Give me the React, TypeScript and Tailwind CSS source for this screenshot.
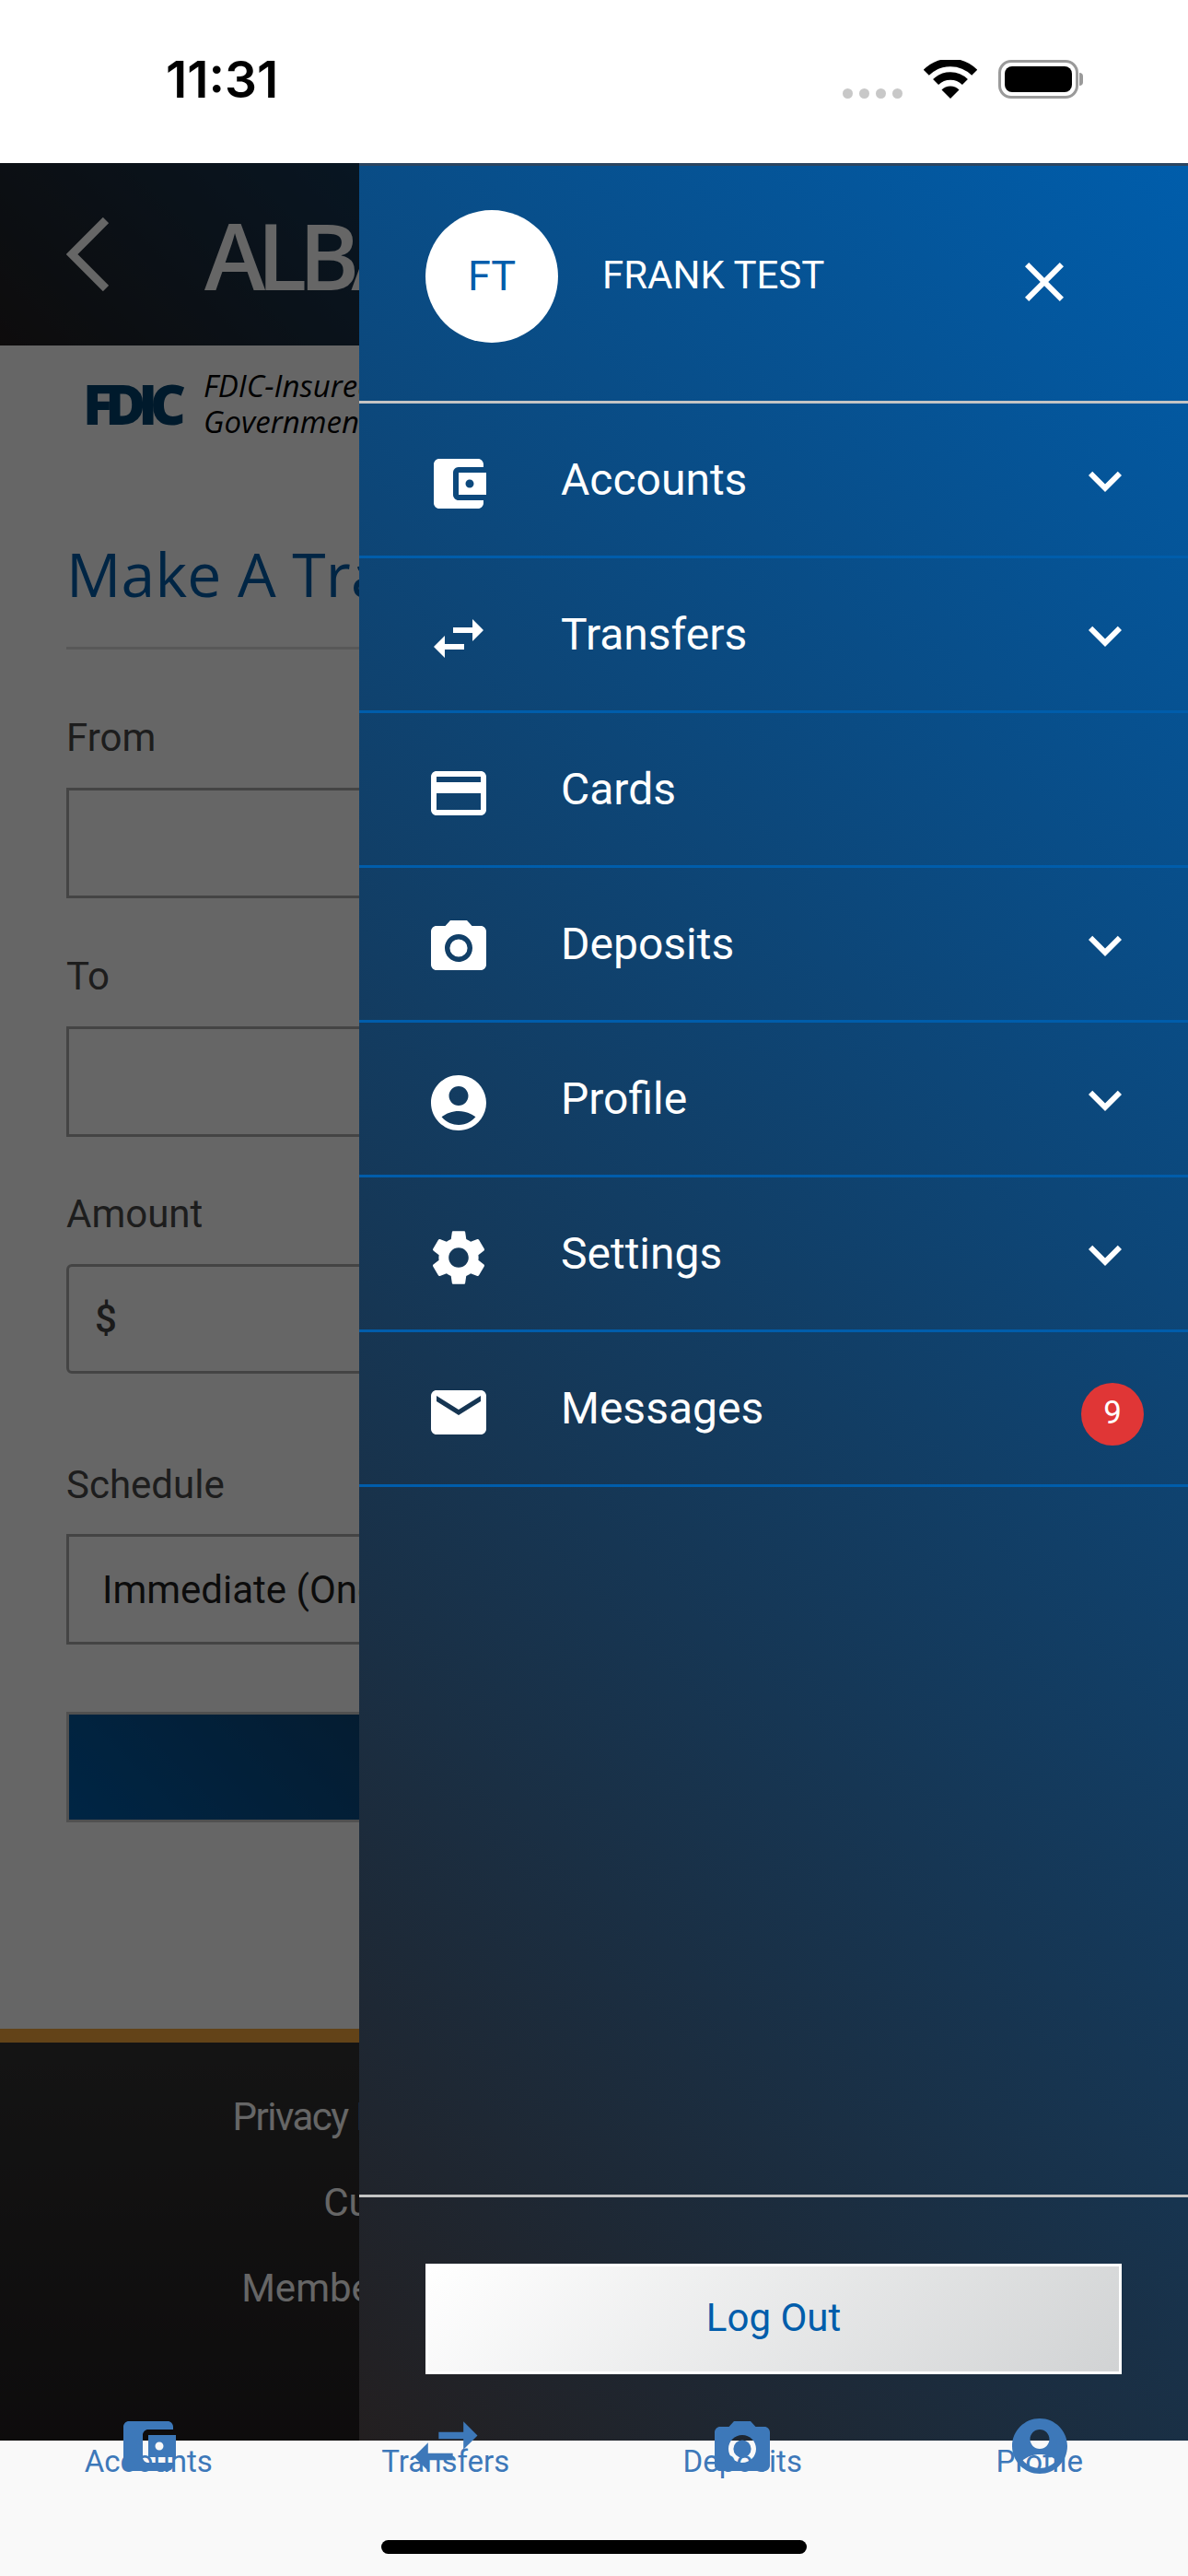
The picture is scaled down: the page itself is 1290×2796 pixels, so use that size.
import React from "react";

const P = {
  wallet:
    "M21 18v1c0 1.1-.9 2-2 2H5c-1.11 0-2-.9-2-2V5c0-1.1.89-2 2-2h14c1.1 0 2 .9 2 2v1h-9c-1.11 0-2 .9-2 2v8c0 1.1.89 2 2 2h9zm-9-2h10V8H12v8zm4-2.5c-.83 0-1.5-.67-1.5-1.5s.67-1.5 1.5-1.5 1.5.67 1.5 1.5-.67 1.5-1.5 1.5z",
  swap: "M6.99 11L3 15l3.99 4v-3H14v-2H6.99v-3zM21 9l-3.99-4v3H10v2h7.01v3L21 9z",
  card: "M20 4H4c-1.11 0-1.99.89-1.99 2L2 18c0 1.11.89 2 2 2h16c1.11 0 2-.89 2-2V6c0-1.11-.89-2-2-2zm0 14H4v-6h16v6zm0-10H4V6h16v2z",
  camera:
    "M9 2L7.17 4H4c-1.1 0-2 .9-2 2v12c0 1.1.9 2 2 2h16c1.1 0 2-.9 2-2V6c0-1.1-.9-2-2-2h-3.17L15 2H9zm3 15c-2.76 0-5-2.24-5-5s2.24-5 5-5 5 2.24 5 5-2.24 5-5 5zm0-8.2a3.2 3.2 0 1 0 0 6.4 3.2 3.2 0 0 0 0-6.4z",
  profile:
    "M12 2C6.48 2 2 6.48 2 12s4.48 10 10 10 10-4.48 10-10S17.52 2 12 2zm0 4c1.93 0 3.5 1.57 3.5 3.5S13.93 13 12 13s-3.5-1.57-3.5-3.5S10.07 6 12 6zm0 14c-2.03 0-4.43-.82-6.14-2.88C7.55 15.8 9.68 15 12 15s4.45.8 6.14 2.12C16.43 19.18 14.03 20 12 20z",
  gear: "M19.14 12.94c.04-.3.06-.61.06-.94 0-.32-.02-.64-.07-.94l2.03-1.58c.18-.14.23-.41.12-.61l-1.92-3.32c-.12-.22-.37-.29-.59-.22l-2.39.96c-.5-.38-1.03-.7-1.62-.94l-.36-2.54c-.04-.24-.24-.41-.48-.41h-3.84c-.24 0-.43.17-.47.41l-.36 2.54c-.59.24-1.13.57-1.62.94l-2.39-.96c-.22-.08-.47 0-.59.22L2.74 8.87c-.12.21-.08.47.12.61l2.03 1.58c-.05.3-.09.63-.09.94s.02.64.07.94l-2.03 1.58c-.18.14-.23.41-.12.61l1.92 3.32c.12.22.37.29.59.22l2.39-.96c.5.38 1.03.7 1.62.94l.36 2.54c.05.24.24.41.48.41h3.84c.24 0 .44-.17.47-.41l.36-2.54c.59-.24 1.13-.56 1.62-.94l2.39.96c.22.08.47 0 .59-.22l1.92-3.32c.12-.22.07-.47-.12-.61l-2.01-1.58zM12 15.6c-1.98 0-3.6-1.62-3.6-3.6s1.62-3.6 3.6-3.6 3.6 1.62 3.6 3.6-1.62 3.6-3.6 3.6z",
  mail: "M20 4H4c-1.1 0-1.99.9-1.99 2L2 18c0 1.1.9 2 2 2h16c1.1 0 2-.9 2-2V6c0-1.1-.9-2-2-2zm0 4l-8 5-8-5V6l8 5 8-5v2z",
  chevron: "M16.59 8.59L12 13.17 7.41 8.59 6 10l6 6 6-6z",
  close:
    "M19 6.41L17.59 5 12 10.59 6.41 5 5 6.41 10.59 12 5 17.59 6.41 19 12 13.41 17.59 19 19 17.59 13.41 12z",
};

function Icon({ d, className }: { d: string; className?: string }) {
  return (
    <svg viewBox="0 0 24 24" fill="currentColor" fillRule="evenodd" className={className}>
      <path d={d} />
    </svg>
  );
}

function StatusBar() {
  return (
    <div className="h-[177px] shrink-0 bg-white flex items-start">
      <span className="ml-[180px] mt-[56px] text-[55px] leading-[60px] font-semibold font-[Inter,sans-serif] text-black">
        11:31
      </span>
      <div className="ml-auto mr-[114px] mt-[65px] flex items-end">
        <div className="flex gap-[7px]">
          <span className="w-[11px] h-[11px] rounded-full bg-[#c8c8c8]" />
          <span className="w-[11px] h-[11px] rounded-full bg-[#c8c8c8]" />
          <span className="w-[11px] h-[11px] rounded-full bg-[#c8c8c8]" />
          <span className="w-[11px] h-[11px] rounded-full bg-[#c8c8c8]" />
        </div>
        <svg viewBox="0 0 58 42" className="w-[58px] h-[42px] ml-[23px]" fill="none" stroke="#000">
          <path d="M2.8 13.8A37 37 0 0 1 55.2 13.8" strokeWidth="8.5" />
          <path d="M13.1 24.1A22.5 22.5 0 0 1 44.9 24.1" strokeWidth="8.5" />
          <path d="M29 42L19.5 32.5A13.4 13.4 0 0 1 38.5 32.5Z" fill="#000" stroke="none" />
        </svg>
        <div className="ml-[23px] flex items-center">
          <div className="w-[87px] h-[42px] rounded-[14px] border-[3px] border-[#9a9a9a] p-[4px]">
            <div className="w-full h-full rounded-[8px] bg-black" />
          </div>
          <span className="ml-[1px] w-[4px] h-[14px] rounded-r-full bg-[#9a9a9a]" />
        </div>
      </div>
    </div>
  );
}

function BoxField({ label, gap, boxClass, children }: { label: string; gap: string; boxClass: string; children?: React.ReactNode }) {
  return (
    <div className={gap}>
      <div className="text-[42px] leading-[50px] text-[#4a4a4a]">{label}</div>
      <div className={boxClass}>{children}</div>
    </div>
  );
}

function PageBehind() {
  return (
    <div className="absolute inset-0 flex flex-col bg-white">
      <div className="h-[198px] shrink-0 flex items-center pl-[72px] bg-[linear-gradient(45deg,#231f20,#005dab)]">
        <svg viewBox="0 0 46 80" className="w-[46px] h-[80px]" fill="none" stroke="#ffffff" strokeWidth="9">
          <path d="M43 3L6 40L43 77" />
        </svg>
        <span className="ml-[104px] text-[100px] leading-[100px] font-semibold font-['Open_Sans',sans-serif] text-white tracking-[-0.09em]">
          ALBANY
        </span>
      </div>
      <div className="h-[126px] shrink-0 flex items-center pl-[90px]">
        <span className="w-[108px] text-[60px] leading-[60px] font-extrabold font-['Open_Sans',sans-serif] text-[#00426f] tracking-[-0.135em]">
          FDIC
        </span>
        <div className="ml-[23px] text-[33px] leading-[39px] italic font-['Open_Sans',sans-serif] text-black whitespace-nowrap">
          <div>FDIC-Insured - Backed by the full faith</div>
          <div>Government</div>
        </div>
      </div>
      <div className="px-[72px]">
        <div className="mt-[84px] text-[66px] leading-[75px] font-medium tracking-[0.003em] text-[#005dab] font-['Open_Sans',sans-serif]">
          Make A Transfer
        </div>
        <div className="mt-[42px] h-[3px] bg-[#dddddd]" />
        <BoxField label="From" gap="mt-[71px]" boxClass="mt-[29px] h-[120px] border-[3px] border-[#aaaaaa]" />
        <BoxField label="To" gap="mt-[60px]" boxClass="mt-[29px] h-[120px] border-[3px] border-[#aaaaaa]" />
        <BoxField
          label="Amount"
          gap="mt-[59px]"
          boxClass="mt-[29px] h-[119px] border-[3px] border-[#aaaaaa] rounded-[6px] flex items-center text-[42px] text-[#444444]"
        >
          <span className="ml-[28px] font-medium">$</span>
        </BoxField>
        <BoxField
          label="Schedule"
          gap="mt-[96px]"
          boxClass="mt-[28px] h-[120px] border-[3px] border-[#aaaaaa] flex items-center text-[42px] text-[#1e1e1e]"
        >
          <span className="ml-[36px]">Immediate (One Time)</span>
        </BoxField>
        <div className="mt-[73px] h-[120px] border-[3px] border-[#c8c8c8] bg-[linear-gradient(45deg,#005dab,#231f20)]" />
      </div>
      <div className="mt-auto">
        <div className="h-[15px] bg-[#f7a73c]" />
        <div className="h-[432px] pt-[34px] bg-[linear-gradient(to_bottom,#333333,#231f20)] text-center text-[42px] leading-[93px] text-white">
          <div className="pr-[44px] tracking-[-1.5px]">Privacy Policy | Terms and Conditions | FAQ</div>
          <div>Customer Service 1-800-555-01</div>
          <div className="pl-[75px]">Member FDIC | Equal Housing Lender | NMLS</div>
        </div>
      </div>
    </div>
  );
}

function Row({ icon, label, chevron, badge }: { icon: string; label: string; chevron?: boolean; badge?: string }) {
  return (
    <div className="h-[168px] shrink-0 border-b-[3px] border-[#005dab] flex items-center pl-[72px] pr-[54px]">
      <Icon d={icon} className="w-[72px] h-[72px] mt-[8px] text-white" />
      <span className="ml-[75px] text-[48px] leading-[56px] text-white">{label}</span>
      {chevron && <Icon d={P.chevron} className="ml-auto mt-[3px] w-[72px] h-[72px] text-white" />}
      {badge && (
        <span className="ml-auto -mr-[6px] mt-[12px] w-[68px] h-[68px] rounded-full bg-[#e03636] flex items-center justify-center text-[35px] text-white">
          {badge}
        </span>
      )}
    </div>
  );
}

function Drawer() {
  return (
    <div className="absolute top-0 right-0 bottom-0 w-[900px] border-t-[3px] border-[#2c4560] flex flex-col bg-[linear-gradient(45deg,#231f20,#005dab)]">
      <div className="h-[258px] shrink-0 border-b-[3px] border-[#c4c4c4] flex items-start pt-[48px] pl-[72px] pr-[120px]">
        <div className="w-[144px] h-[144px] rounded-full bg-white flex items-center justify-center text-[45px] text-[#005dab]">
          FT
        </div>
        <span className="ml-[48px] mt-[46px] text-[42px] leading-[50px] text-white">FRANK TEST</span>
        <Icon d={P.close} className="ml-auto mt-[42px] w-[72px] h-[72px] text-white" />
      </div>
      <Row icon={P.wallet} label="Accounts" chevron />
      <Row icon={P.swap} label="Transfers" chevron />
      <Row icon={P.card} label="Cards" />
      <Row icon={P.camera} label="Deposits" chevron />
      <Row icon={P.profile} label="Profile" chevron />
      <Row icon={P.gear} label="Settings" chevron />
      <Row icon={P.mail} label="Messages" badge="9" />
      <div className="flex-1" />
      <div className="h-[267px] shrink-0 border-t-[3px] border-[#c4c4c4] px-[72px] pt-[72px]">
        <div className="h-[120px] pb-[4px] border-[3px] border-white bg-[linear-gradient(135deg,#ffffff,#d1d3d4)] flex items-center justify-center text-[42px] text-[#005dab]">
          Log Out
        </div>
      </div>
    </div>
  );
}

function Tab({ icon, label, iconClass }: { icon: string; label: string; iconClass: string }) {
  return (
    <div className="flex-1 relative flex justify-center text-[#3d78b9]">
      <span className="mt-[4px] text-[33px] leading-[38px]">{label}</span>
      <Icon d={icon} className={iconClass} />
    </div>
  );
}

export default function App() {
  return (
    <div className="w-[1290px] h-[2796px] relative flex flex-col overflow-hidden font-[Roboto,sans-serif]">
      <StatusBar />
      <div className="flex-1 relative">
        <PageBehind />
        <div className="absolute inset-0 bg-black/60" />
        <Drawer />
      </div>
      <div className="h-[147px] shrink-0 relative bg-[#f9f9f9]">
        <div className="flex">
          <Tab icon={P.wallet} label="Accounts" iconClass="absolute top-[-30px] left-[125px] w-[72px] h-[72px]" />
          <Tab icon={P.swap} label="Transfers" iconClass="absolute top-[-40px] left-[115px] w-[92px] h-[92px]" />
          <Tab icon={P.camera} label="Deposits" iconClass="absolute top-[-27px] left-[125px] w-[72px] h-[72px]" />
          <Tab icon={P.profile} label="Profile" iconClass="absolute top-[-30px] left-[125px] w-[72px] h-[72px]" />
        </div>
        <div className="absolute left-[414px] top-[108px] w-[462px] h-[15px] rounded-full bg-black" />
      </div>
    </div>
  );
}
